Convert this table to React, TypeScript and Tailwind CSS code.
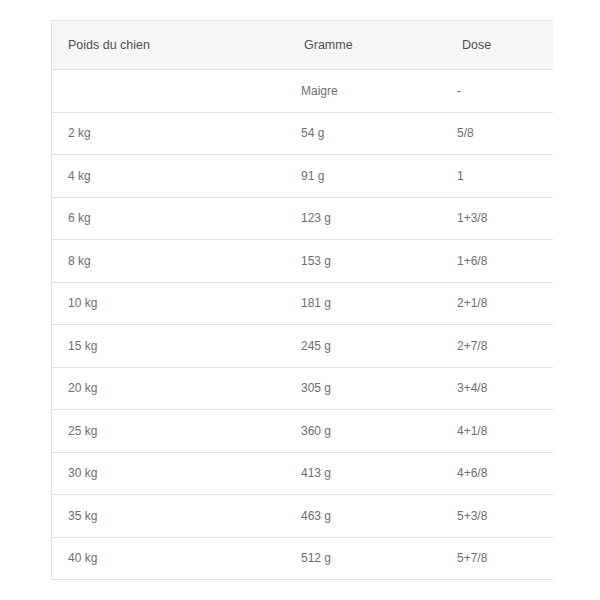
const ROWS: [string, string, string][] = [
  ['', 'Maigre', '-'],
  ['2 kg', '54 g', '5/8'],
  ['4 kg', '91 g', '1'],
  ['6 kg', '123 g', '1+3/8'],
  ['8 kg', '153 g', '1+6/8'],
  ['10 kg', '181 g', '2+1/8'],
  ['15 kg', '245 g', '2+7/8'],
  ['20 kg', '305 g', '3+4/8'],
  ['25 kg', '360 g', '4+1/8'],
  ['30 kg', '413 g', '4+6/8'],
  ['35 kg', '463 g', '5+3/8'],
  ['40 kg', '512 g', '5+7/8'],
]

export default function App() {
  return (
    <div className="min-h-[600px] bg-white pt-5 pl-[51px] font-['Liberation_Sans',sans-serif]">
      <div className="w-[502px] border-l border-t border-[#e3e3e3]">
        <div className="flex h-[49px] items-center border-b border-[#dedede] bg-[#f6f6f6] text-[12.5px] text-[#505050]">
          <div className="w-[233px] pl-4">Poids du chien</div>
          <div className="w-[156px] pl-[19px]">Gramme</div>
          <div className="flex-1 pl-[21px]">Dose</div>
        </div>
        {ROWS.map(([w, g, d], i) => (
          <div
            key={i}
            className="flex h-[42.5px] items-center border-b border-[#e0e0e0] text-[12px] text-[#6e6e6e]"
          >
            <div className="w-[233px] pl-4">{w}</div>
            <div className="w-[156px] pl-4">{g}</div>
            <div className="flex-1 pl-4">{d}</div>
          </div>
        ))}
      </div>
    </div>
  )
}
